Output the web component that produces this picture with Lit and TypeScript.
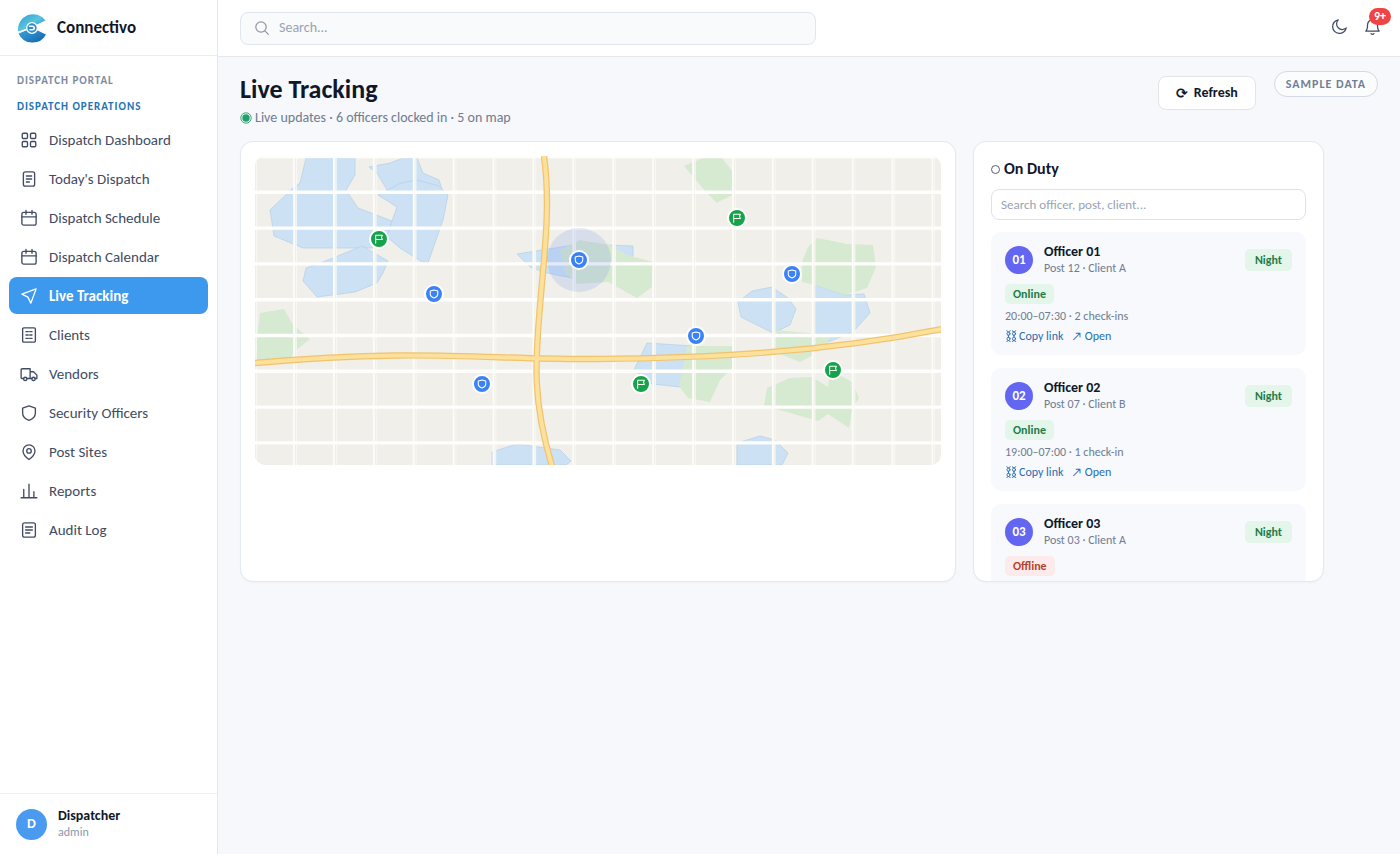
import { LitElement, html, svg, css, nothing } from "lit";
import { customElement, property } from "lit/decorators.js";
import { classMap } from "lit/directives/class-map.js";
import { styleMap } from "lit/directives/style-map.js";

const icons = {
  grid: svg`<rect x="3" y="3" width="7" height="7" rx="1.5"/><rect x="14" y="3" width="7" height="7" rx="1.5"/><rect x="3" y="14" width="7" height="7" rx="1.5"/><rect x="14" y="14" width="7" height="7" rx="1.5"/>`,
  doc: svg`<rect x="4.500" y="2.500" width="15" height="19" rx="2.500"/><path d="M8.500 8h7M8.500 12h7M8.500 16h4"/>`,
  calendar: svg`<rect x="2.500" y="4.500" width="19" height="17" rx="2.500"/><path d="M2.500 10.500h19M8 2v5M16 2v5"/>`,
  send: svg`<path d="M21.500 2.500 14.500 21.500 10.500 13.500 2.500 9.500z"/>`,
  building: svg`<rect x="3.500" y="2.500" width="17" height="19" rx="1.500"/><path d="M8 7.500h3M13 7.500h3M8 12h3M13 12h3M8 16.500h3M13 16.500h3"/>`,
  truck: svg`<path d="M5 18H3a1.500 1.500 0 0 1-1.500-1.500V6.500A1.500 1.500 0 0 1 3 5h10.500v13H9M13.500 9h4.500l4.500 4.500V18H20M16 18h-2.500"/><circle cx="7" cy="18.500" r="2.200"/><circle cx="18" cy="18.500" r="2.200"/>`,
  shield: svg`<path d="M12 2.500 20.500 5.500v6.500c0 4.800-3.600 8-8.500 9.800C7.100 20 3.500 16.800 3.500 12V5.500z"/>`,
  pin: svg`<path d="M20 10.500c0 5.500-8 11.500-8 11.500s-8-6-8-11.500a8 8 0 0 1 16 0z"/><circle cx="12" cy="10.500" r="3"/>`,
  chart: svg`<path d="M1.500 21h21M5 21V10M12 21V3M18.500 21v-8"/>`,
  log: svg`<rect x="3.500" y="2.500" width="17" height="19" rx="2.500"/><path d="M7.500 8h9M7.500 12h9M7.500 16h5.500"/>`,
  search: svg`<circle cx="10.500" cy="10.500" r="7.800"/><path d="m16.300 16.300 5.200 5.200"/>`,
  moon: svg`<path d="M21.500 14A9.700 9.700 0 1 1 10.300 2.500 7.600 7.600 0 0 0 21.500 14z"/>`,
  bell: svg`<path d="M2.500 18.500h19c-2-1.800-2.500-4-2.500-9a7 7 0 0 0-14 0c0 5-.5 7.200-2.500 9zM10 22a2.500 2.500 0 0 0 4 0"/>`,
  chain: svg`<ellipse cx="7" cy="7.500" rx="3" ry="3.500"/><ellipse cx="7" cy="17.500" rx="3" ry="3.500"/><ellipse cx="18" cy="7.500" rx="3" ry="3.500"/><ellipse cx="18" cy="17.500" rx="3" ry="3.500"/><path d="M3.500 1.500 7 4l3.500-2.500M14.500 1.500 18 4l3.500-2.500M7 10v5M18 10v5M3.500 23 7 21l3.500 2M14.500 23l3.500-2 3.500 2"/>`,
};
type IconName = keyof typeof icons;

@customElement("ui-icon")
class UiIcon extends LitElement {
  static styles = css`
    :host { display: inline-flex; width: 18px; height: 18px; flex: none; }
    svg { width: 100%; height: 100%; fill: none; stroke: currentColor; stroke-width: 1.8; stroke-linecap: round; stroke-linejoin: round; }
  `;
  @property() name: IconName = "grid";
  render() {
    return html`<svg viewBox="0 0 24 24" aria-hidden="true">${icons[this.name]}</svg>`;
  }
}

const MAP_WIDTH = 686;
const MAP_HEIGHT = 309;
const water = [
  "51,2 100,2 100,19 91,34 103,52 137,65 132,84 118,92 48,92 19,80 15,54 38,32 45,27",
  "114,11 135,7 148,2 162,2 168,17 184,24 188,36 146,34 132,34 122,17",
  "146,27 162,24 184,30 193,39 188,64 173,107 167,106 145,92 132,81 137,65 142,51 123,39",
  "107,90 133,105 128,117 122,127 100,136 62,141 48,125 51,112 68,106",
  "262,98 325,88 378,90 378,100 340,124 317,122 292,117 275,111",
  "392,187 438,190 425,231 397,228 379,214",
  "237,309 237,296 262,288 305,294 316,305 311,309",
  "483,146 497,135 517,131 533,142 541,153 535,169 518,177 486,161",
  "560,129 590,139 609,138 615,157 598,176 573,186 560,181",
  "482,309 482,287 505,280 520,284 533,297 527,309",
];
const parks = [
  "305,94 325,84 355,89 372,99 398,106 397,131 382,142 353,126 322,128 310,116",
  "432,190 477,190 477,212 465,224 455,246 433,242 424,230",
  "429,10 448,2 467,2 478,16 478,39 465,45 462,47 452,37",
  "562,82 592,88 618,89 621,111 612,132 590,139 560,129 547,126 547,106 553,91",
  "520,174 575,179 573,187 558,199 545,206 520,196",
  "512,232 535,222 557,221 573,231 575,214 597,226 604,242 598,251 594,272 573,258 563,265 518,252 509,250",
  "5,157 29,153 38,169 55,183 40,195 35,203 1,205 2,182",
];
const highways = [
  "M0 207C170 192 230 204 340 203S565 197 687 173",
  "M289 0C296 50 289 100 285 150S276 240 297 310",
];
const columns = Array.from({ length: 18 }, (_, i) => i * 39.9);
const rows = Array.from({ length: 9 }, (_, i) => i * 35.8 + 0.5);

interface Marker { kind: "post" | "officer"; x: number; y: number; label: string }
const markers: Marker[] = [
  { kind: "post", x: 124, y: 83, label: "Post 12" },
  { kind: "officer", x: 179, y: 138, label: "Officer 01" },
  { kind: "officer", x: 227, y: 228, label: "Officer 02" },
  { kind: "officer", x: 324, y: 104, label: "Officer 03" },
  { kind: "post", x: 386, y: 228, label: "Post 07" },
  { kind: "officer", x: 441, y: 180, label: "Officer 04" },
  { kind: "post", x: 482, y: 62, label: "Post 03" },
  { kind: "officer", x: 537, y: 118, label: "Officer 05" },
  { kind: "post", x: 578, y: 214, label: "Post 09" },
];

@customElement("live-map")
class LiveMap extends LitElement {
  static styles = css`
    :host { display: block; }
    .map { position: relative; aspect-ratio: 686 / 309; }
    .tiles { display: block; width: 100%; height: 100%; border-radius: 10px; background: #f0efea; }
    .water { fill: #cce1f3; stroke: #b4cfe8; stroke-width: 0.7; }
    .park { fill: #d6e9d1; }
    .street { stroke: #fefefc; stroke-width: 3.4; }
    .avenue { stroke: #fcfcf8; stroke-width: 3.6; }
    .seam { stroke: #e8e8e0; stroke-width: 0.7; }
    .casing { fill: none; stroke: #f0c36f; stroke-width: 6.4; }
    .road { fill: none; stroke: #fde09a; stroke-width: 4; }
    .range { fill: #6488eb; fill-opacity: 0.17; }
    .marker {
      position: absolute; transform: translate(-50%, -50%); width: 20px; height: 20px; padding: 0;
      border: 2px solid #fff; border-radius: 50%; display: grid; place-items: center; cursor: pointer;
      box-sizing: border-box;
    }
    .officer { background: #3b82f6; }
    .post { background: #16a34a; }
    .glyph { width: 10px; height: 10px; fill: none; stroke: #fff; stroke-width: 2.6; stroke-linejoin: round; stroke-linecap: round; }
  `;
  render() {
    return html`<div class="map">
      <svg class="tiles" viewBox="0 0 ${MAP_WIDTH} ${MAP_HEIGHT}" preserveAspectRatio="xMidYMid slice" role="img" aria-label="City map">
        ${water.map((p) => svg`<polygon class="water" points=${p} />`)}
        ${parks.map((p) => svg`<polygon class="park" points=${p} />`)}
        ${columns.map((x) => svg`<path class="avenue" d="M${x} 0V309" /><path class="seam" d="M${x + 0.6} 0V309" />`)}
        ${rows.map((y) => svg`<path class="street" d="M0 ${y}H686" />`)}
        ${highways.map((d) => svg`<path class="casing" d=${d} />`)}
        <circle class="range" cx="324" cy="104" r="32" />
        ${highways.map((d) => svg`<path class="road" d=${d} />`)}
      </svg>
      ${markers.map((m) => html`<button class="marker ${m.kind}" aria-label=${m.label}
        style=${styleMap({ left: `${(m.x / MAP_WIDTH) * 100}%`, top: `${(m.y / MAP_HEIGHT) * 100}%` })}>
        <svg class="glyph" viewBox="0 0 24 24" aria-hidden="true">
          ${m.kind === "officer"
            ? svg`<path d="M12 2.500 21 5v7c0 4.500-3 7.500-9 9.500-6-2-9-5-9-9.500V5z"/>`
            : svg`<path d="M4 22V3h16l-2 5 2 5H4"/>`}
        </svg></button>`)}
    </div>`;
  }
}

const nav: { icon: IconName; label: string; active?: boolean }[] = [
  { icon: "grid", label: "Dispatch Dashboard" },
  { icon: "doc", label: "Today's Dispatch" },
  { icon: "calendar", label: "Dispatch Schedule" },
  { icon: "calendar", label: "Dispatch Calendar" },
  { icon: "send", label: "Live Tracking", active: true },
  { icon: "building", label: "Clients" },
  { icon: "truck", label: "Vendors" },
  { icon: "shield", label: "Security Officers" },
  { icon: "pin", label: "Post Sites" },
  { icon: "chart", label: "Reports" },
  { icon: "log", label: "Audit Log" },
];

const officers: { id: string; place: string; online: boolean; log?: string }[] = [
  { id: "01", place: "Post 12 · Client A", online: true, log: "20:00–07:30 · 2 check-ins" },
  { id: "02", place: "Post 07 · Client B", online: true, log: "19:00–07:00 · 1 check-in" },
  { id: "03", place: "Post 03 · Client A", online: false },
];

@customElement("app-root")
class AppRoot extends LitElement {
  static styles = css`
    :host {
      display: grid; grid-template-columns: 218px minmax(0, 1fr); height: 100vh; overflow: hidden;
      background: #f6f8fc; color: #0f172a; font: 14px/20px Carlito, Lato, sans-serif;
    }
    * { box-sizing: border-box; }
    h1, h2, h3, p, ul { margin: 0; padding: 0; }
    button, input { font: inherit; color: inherit; }
    a { color: inherit; text-decoration: none; }
    .sidebar { display: flex; flex-direction: column; background: #fff; border-right: 1px solid #e2e8f0; }
    .brand { display: flex; align-items: center; gap: 9px; height: 56px; padding: 0 16px; border-bottom: 1px solid #eaeef4; font-size: 17px; font-weight: 700; }
    .logo { width: 32px; height: 32px; }
    .menu { flex: 1; padding: 15px 9px; }
    .caption { padding: 0 8px; font-size: 11px; line-height: 20px; font-weight: 700; letter-spacing: 1px; color: #7c8aa0; }
    .section { margin-top: 6px; color: #2272b8; }
    .links { list-style: none; margin-top: 4px; display: grid; gap: 2px; }
    .item { display: flex; align-items: center; gap: 11px; height: 37px; padding: 0 11px; border-radius: 8px; color: #414c63; font-size: 15px; }
    .active { background: #3d99ee; color: #fff; font-weight: 700; }
    .user { display: flex; align-items: center; gap: 11px; height: 61px; padding: 0 16px; border-top: 1px solid #edf1f6; }
    .face { display: grid; place-items: center; width: 31px; height: 31px; border-radius: 50%; background: #4a9bf0; color: #fff; font-size: 14px; font-weight: 700; }
    .who { line-height: 16px; }
    .who strong { display: block; }
    .role { font-size: 12px; color: #8b98ae; }
    .body { display: flex; flex-direction: column; min-width: 0; }
    .topbar { display: flex; align-items: center; justify-content: space-between; height: 57px; padding: 0 19px 0 22px; background: #fff; border-bottom: 1px solid #e2e8f0; }
    .search { display: flex; align-items: center; gap: 9px; flex: 0 1 576px; height: 33px; padding: 0 13px; border: 1px solid #dfe6ee; border-radius: 8px; background: #f8fafc; color: #8e95a5; }
    .search ui-icon { width: 16px; height: 16px; }
    .field { flex: 1; min-width: 0; border: 0; outline: 0; padding: 0; background: none; }
    ::placeholder { color: #98a3b5; opacity: 1; }
    .tools { display: flex; gap: 16px; padding-bottom: 4px; color: #414c63; }
    .tools ui-icon { width: 17px; height: 17px; }
    .tool { position: relative; display: flex; padding: 0; border: 0; background: none; cursor: pointer; }
    .count { position: absolute; left: 5px; top: -10px; min-width: 22px; height: 17px; border-radius: 9px; background: #ef4444; color: #fff; font-size: 12px; line-height: 17px; font-weight: 700; text-align: center; }
    .page { flex: 1; padding: 14px 22px; min-height: 0; }
    .heading { display: flex; align-items: flex-start; gap: 18px; margin-bottom: 12px; }
    .titles { flex: 1; }
    h1 { font-size: 26px; line-height: 36px; }
    .status { display: flex; align-items: center; gap: 3px; color: #6f7c90; line-height: 22px; }
    .live { width: 12px; height: 12px; }
    .refresh { display: flex; align-items: center; gap: 6px; height: 34px; margin-top: 5px; padding: 0 17px; border: 1px solid #dfe5ed; border-radius: 8px; background: #fff; font-weight: 700; cursor: pointer; }
    .turn { font-family: "DejaVu Sans", sans-serif; font-size: 14px; }
    .sample { height: 26px; padding: 0 11px; border: 1px solid #d3d9e2; border-radius: 13px; background: #fbfcfe; font-size: 12px; line-height: 24px; font-weight: 700; letter-spacing: 1px; color: #718096; }
    .panels { display: grid; grid-template-columns: minmax(0, 1fr) 351px; gap: 17px; max-width: 1084px; height: 441px; }
    .card { min-height: 0; background: #fff; border: 1px solid #e3e9f1; border-radius: 13px; overflow: hidden; box-shadow: 0 1px 2px rgba(15, 23, 42, 0.03); }
    .mapcard { padding: 14px; }
    .duty { padding: 16px 17px; }
    h2 { display: flex; align-items: center; gap: 4px; font-size: 16px; line-height: 22px; }
    .ring { width: 9px; height: 9px; border: 1px solid #555e6e; border-radius: 50%; }
    .find { display: block; width: 100%; height: 31px; margin: 9px 0 12px; padding: 0 9px; border: 1px solid #dde3ea; border-radius: 8px; background: #fff; font-size: 13px; outline: 0; }
    .roster { list-style: none; display: grid; gap: 13px; }
    .officer { min-height: 123px; padding: 11px 14px 10px; border-radius: 10px; background: #f7f9fc; font-size: 12px; }
    .top { display: flex; align-items: center; gap: 11px; margin-bottom: 7px; }
    .badge { display: grid; place-items: center; width: 28px; height: 28px; border-radius: 50%; background: #6366f1; color: #fff; font-size: 13px; font-weight: 700; }
    .name { flex: 1; line-height: 17px; }
    h3 { font-size: 14px; line-height: 17px; }
    .muted { color: #6f7c90; }
    .tag { display: block; width: fit-content; padding: 0 8px; border-radius: 5px; line-height: 20px; font-weight: 700; background: #e4f6ea; color: #1c7c48; }
    .shift { padding: 0 10px; line-height: 22px; }
    .off { background: #fdeaea; color: #b5402f; }
    .log { margin-top: 3px; line-height: 18px; color: #6f7c90; }
    .actions { display: flex; gap: 8px; margin-top: 2px; line-height: 18px; color: #2a6db0; }
    .copy { display: flex; align-items: center; gap: 2px; }
    .copy ui-icon { width: 12px; height: 12px; }
  `;

  private logo() {
    return html`<svg class="logo" viewBox="0 0 32 32" aria-hidden="true">
      <defs>
        <linearGradient id="up" x1="0" y1="0" x2="1" y2="1"><stop offset="0" stop-color="#2f9bd0" /><stop offset=".5" stop-color="#58c4de" /><stop offset="1" stop-color="#2586c8" /></linearGradient>
        <linearGradient id="down" x1="0" y1="0" x2="1" y2="1"><stop offset="0" stop-color="#42aadb" /><stop offset="1" stop-color="#0f5fae" /></linearGradient>
      </defs>
      <path fill="url(#up)" d="M2 19.500A15.300 15.300 0 0 1 29.500 8.500L21 12.500 16 16 9.500 17z" />
      <path fill="url(#down)" d="M2.500 21.500 9.800 18.500 16 16 20.500 18 30 22.500A15.300 15.300 0 0 1 2.500 21.500z" />
      <circle cx="16" cy="16" r="5.300" fill="#2d8dcd" stroke="#fff" stroke-width="1.300" />
      <path fill="none" stroke="#fff" stroke-width="1.600" stroke-linecap="round" d="M13.500 14.300h3a1.700 1.700 0 0 1 0 3.400h-2.500" />
      <path stroke="#fff" stroke-width="1.300" d="M1.500 20.800 10.500 17.500M21.500 14.500 30 13M21.500 17.500l6 .5" />
    </svg>`;
  }

  render() {
    return html`
      <aside class="sidebar">
        <div class="brand">${this.logo()}<span>Connectivo</span></div>
        <nav class="menu">
          <p class="caption">DISPATCH PORTAL</p>
          <p class="caption section">DISPATCH OPERATIONS</p>
          <ul class="links">
            ${nav.map((n) => html`<li><a href="#" class=${classMap({ item: true, active: !!n.active })}>
              <ui-icon name=${n.icon}></ui-icon>${n.label}</a></li>`)}
          </ul>
        </nav>
        <div class="user">
          <span class="face">D</span>
          <div class="who"><strong>Dispatcher</strong><span class="role">admin</span></div>
        </div>
      </aside>
      <div class="body">
        <header class="topbar">
          <label class="search"><ui-icon name="search"></ui-icon>
            <input class="field" type="search" placeholder="Search..." aria-label="Search" /></label>
          <div class="tools">
            <button class="tool" aria-label="Dark mode"><ui-icon name="moon"></ui-icon></button>
            <button class="tool" aria-label="Notifications"><ui-icon name="bell"></ui-icon><span class="count">9+</span></button>
          </div>
        </header>
        <main class="page">
          <div class="heading">
            <div class="titles">
              <h1>Live Tracking</h1>
              <p class="status"><svg class="live" viewBox="0 0 12 12" aria-hidden="true">
                <circle cx="6" cy="6" r="5.200" fill="none" stroke="#22a06b" stroke-width=".9" /><circle cx="6" cy="6" r="3.700" fill="#22a06b" /></svg>
                <span>Live updates · 6 officers clocked in · 5 on map</span></p>
            </div>
            <button class="refresh"><span class="turn">⟳</span>Refresh</button>
            <span class="sample">SAMPLE DATA</span>
          </div>
          <div class="panels">
            <section class="card mapcard"><live-map></live-map></section>
            <section class="card duty">
              <h2><span class="ring"></span>On Duty</h2>
              <input class="find" type="search" placeholder="Search officer, post, client..." aria-label="Search officer, post, client" />
              <ul class="roster">
                ${officers.map((o) => html`<li class="officer">
                  <div class="top">
                    <span class="badge">${o.id}</span>
                    <div class="name"><h3>Officer ${o.id}</h3><p class="muted">${o.place}</p></div>
                    <span class="tag shift">Night</span>
                  </div>
                  <span class=${classMap({ tag: true, off: !o.online })}>${o.online ? "Online" : "Offline"}</span>
                  ${o.log
                    ? html`<p class="log">${o.log}</p>
                      <div class="actions"><a class="copy" href="#"><ui-icon name="chain"></ui-icon>Copy link</a><a href="#">↗ Open</a></div>`
                    : nothing}
                </li>`)}
              </ul>
            </section>
          </div>
        </main>
      </div>`;
  }
}
